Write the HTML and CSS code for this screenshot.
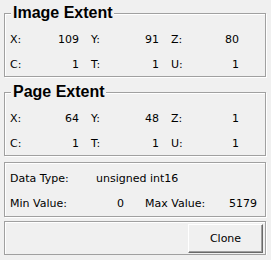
FILE: index.html
```html
<!DOCTYPE html>
<html lang="en">
<head>
    <meta charset="UTF-8">
    <title>Image Info</title>
    <link rel="stylesheet" href="styles.css">
</head>
<body>

<div class="panel">
    <!-- Image Extent -->
    <div class="group extent first">
        <div class="group-title">Image Extent</div>
        <div class="dims">
            <div class="dim"><span>X:</span><span>109</span></div>
            <div class="dim"><span>Y:</span><span>91</span></div>
            <div class="dim"><span>Z:</span><span>80</span></div>
            <div class="dim"><span>C:</span><span>1</span></div>
            <div class="dim"><span>T:</span><span>1</span></div>
            <div class="dim"><span>U:</span><span>1</span></div>
        </div>
    </div>

    <!-- Page Extent -->
    <div class="group extent">
        <div class="group-title">Page Extent</div>
        <div class="dims">
            <div class="dim"><span>X:</span><span>64</span></div>
            <div class="dim"><span>Y:</span><span>48</span></div>
            <div class="dim"><span>Z:</span><span>1</span></div>
            <div class="dim"><span>C:</span><span>1</span></div>
            <div class="dim"><span>T:</span><span>1</span></div>
            <div class="dim"><span>U:</span><span>1</span></div>
        </div>
    </div>

    <!-- Data info -->
    <div class="group data">
        <div class="data-type">
            <span class="data-label">Data Type:</span>
            <span>unsigned int16</span>
        </div>
        <div class="ranges">
            <div class="dim"><span>Min Value:</span><span>0</span></div>
            <div class="dim"><span>Max Value:</span><span>5179</span></div>
        </div>
    </div>

    <div class="group actions">
        <button class="btn">Clone</button>
    </div>
</div>

</body>
</html>
```

FILE: styles.css
```css
body {
    margin: 0;
    background-color: #f0f0f0;
    font-family: "DejaVu Sans", sans-serif;
    font-size: 11px;
    color: #000;
}

.panel {
    display: flex;
    flex-direction: column;
    width: 262px;
    padding-left: 4px;
}

.group {
    border: 1px solid #a0a0a0;
    box-shadow: inset 1px 1px 0 #fff, 1px 1px 0 #fff;
}

.extent {
    margin-top: 15px;
}

.extent.first {
    margin-top: 13px;
}

.group-title {
    width: fit-content;
    margin: -10px 0 0 6px;
    padding: 0 1px 0 2px;
    background-color: #f0f0f0;
    font-family: "Liberation Sans", Arial, sans-serif;
    font-weight: bold;
    font-size: 16px;
    line-height: 18px;
}

.dims {
    display: grid;
    grid-template-columns: 69px 68px 68px;
    grid-auto-rows: 24px;
    column-gap: 12px;
    row-gap: 1px;
    padding: 5px 0 0 5px;
}

.dim {
    display: flex;
    justify-content: space-between;
    align-items: center;
}

.data {
    margin-top: 6px;
    padding: 3px 0 1px 5px;
}

.data-type {
    display: flex;
    align-items: center;
    height: 24px;
    margin-bottom: 1px;
}

.data-label {
    width: 86px;
}

.ranges {
    display: grid;
    grid-template-columns: 114px 112px;
    grid-auto-rows: 24px;
    column-gap: 21px;
}

.actions {
    display: flex;
    justify-content: flex-end;
    margin-top: 4px;
    padding: 2px 2px 1px 0;
}

.btn {
    width: 75px;
    height: 29px;
    padding: 0;
    background-color: #f0f0f0;
    border-top: 1px solid #fff;
    border-left: 1px solid #fff;
    border-right: 1px solid #696969;
    border-bottom: 1px solid #696969;
    box-shadow: inset -1px -1px 0 #a0a0a0;
    font-family: "DejaVu Sans", sans-serif;
    font-size: 11px;
    color: #000;
}
```
